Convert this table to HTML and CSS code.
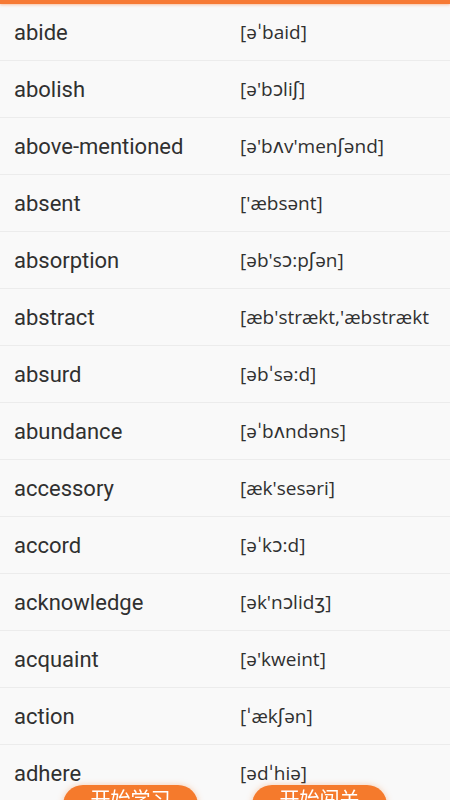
FILE: index.html
```html
<!DOCTYPE html>
<html>
<head>
<meta charset="utf-8">
<link rel="stylesheet" href="styles.css">
</head>
<body>
<div class="topbar"></div>
<ul class="list">
  <li class="row"><span class="word">abide</span><span class="ph">[əˈbaid]</span></li>
  <li class="row"><span class="word">abolish</span><span class="ph">[ə'bɔliʃ]</span></li>
  <li class="row"><span class="word">above-mentioned</span><span class="ph">[ə'bʌv'menʃənd]</span></li>
  <li class="row"><span class="word">absent</span><span class="ph">['æbsənt]</span></li>
  <li class="row"><span class="word">absorption</span><span class="ph">[əb'sɔ:pʃən]</span></li>
  <li class="row"><span class="word">abstract</span><span class="ph">[æb'strækt,'æbstrækt</span></li>
  <li class="row"><span class="word">absurd</span><span class="ph">[əbˈsə:d]</span></li>
  <li class="row"><span class="word">abundance</span><span class="ph">[əˈbʌndəns]</span></li>
  <li class="row"><span class="word">accessory</span><span class="ph">[æk'sesəri]</span></li>
  <li class="row"><span class="word">accord</span><span class="ph">[əˈkɔ:d]</span></li>
  <li class="row"><span class="word">acknowledge</span><span class="ph">[ək'nɔlidʒ]</span></li>
  <li class="row"><span class="word">acquaint</span><span class="ph">[ə'kweint]</span></li>
  <li class="row"><span class="word">action</span><span class="ph">[ˈækʃən]</span></li>
  <li class="row"><span class="word">adhere</span><span class="ph">[ədˈhiə]</span></li>
</ul>
<div class="actions">
  <button class="btn">开始学习</button>
  <button class="btn">开始闯关</button>
</div>
</body>
</html>
```
FILE: styles.css
```css
html, body {
  margin: 0;
  padding: 0;
  background: #f9f9f9;
  font-family: Roboto, "Noto Sans", "Noto Sans CJK SC", sans-serif;
  color: #303030;
  overflow: hidden;
  height: 800px;
}
.topbar {
  height: 4px;
  background: #f77a34;
  box-shadow: 0 1px 3px rgba(247, 122, 52, 0.45);
  position: relative;
  z-index: 2;
}
.list {
  list-style: none;
  margin: 0;
  padding: 0;
}
.row {
  height: 56px;
  border-bottom: 1px solid #ececec;
  display: grid;
  grid-template-columns: 226px 1fr;
  align-items: center;
  padding-left: 14px;
  padding-right: 12px;
  font-size: 22px;
}
.word {
  white-space: nowrap;
}
.ph {
  white-space: nowrap;
  overflow: hidden;
  font-size: 19px;
  font-family: "Open Sans", "DejaVu Sans", sans-serif;
}
.actions {
  position: fixed;
  left: 0;
  right: 0;
  top: 785px;
  display: flex;
  justify-content: center;
  gap: 54px;
}
.btn {
  width: 135px;
  height: 40px;
  border: none;
  border-radius: 20px;
  background: #f57a2c;
  color: #fff;
  font-size: 20px;
  font-family: "Noto Sans CJK SC", sans-serif;
  display: flex;
  justify-content: center;
  align-items: flex-start;
  line-height: 1;
  padding: 4px 0 0;
  box-shadow: 0 0 6px rgba(245, 122, 44, 0.35);
}
```
